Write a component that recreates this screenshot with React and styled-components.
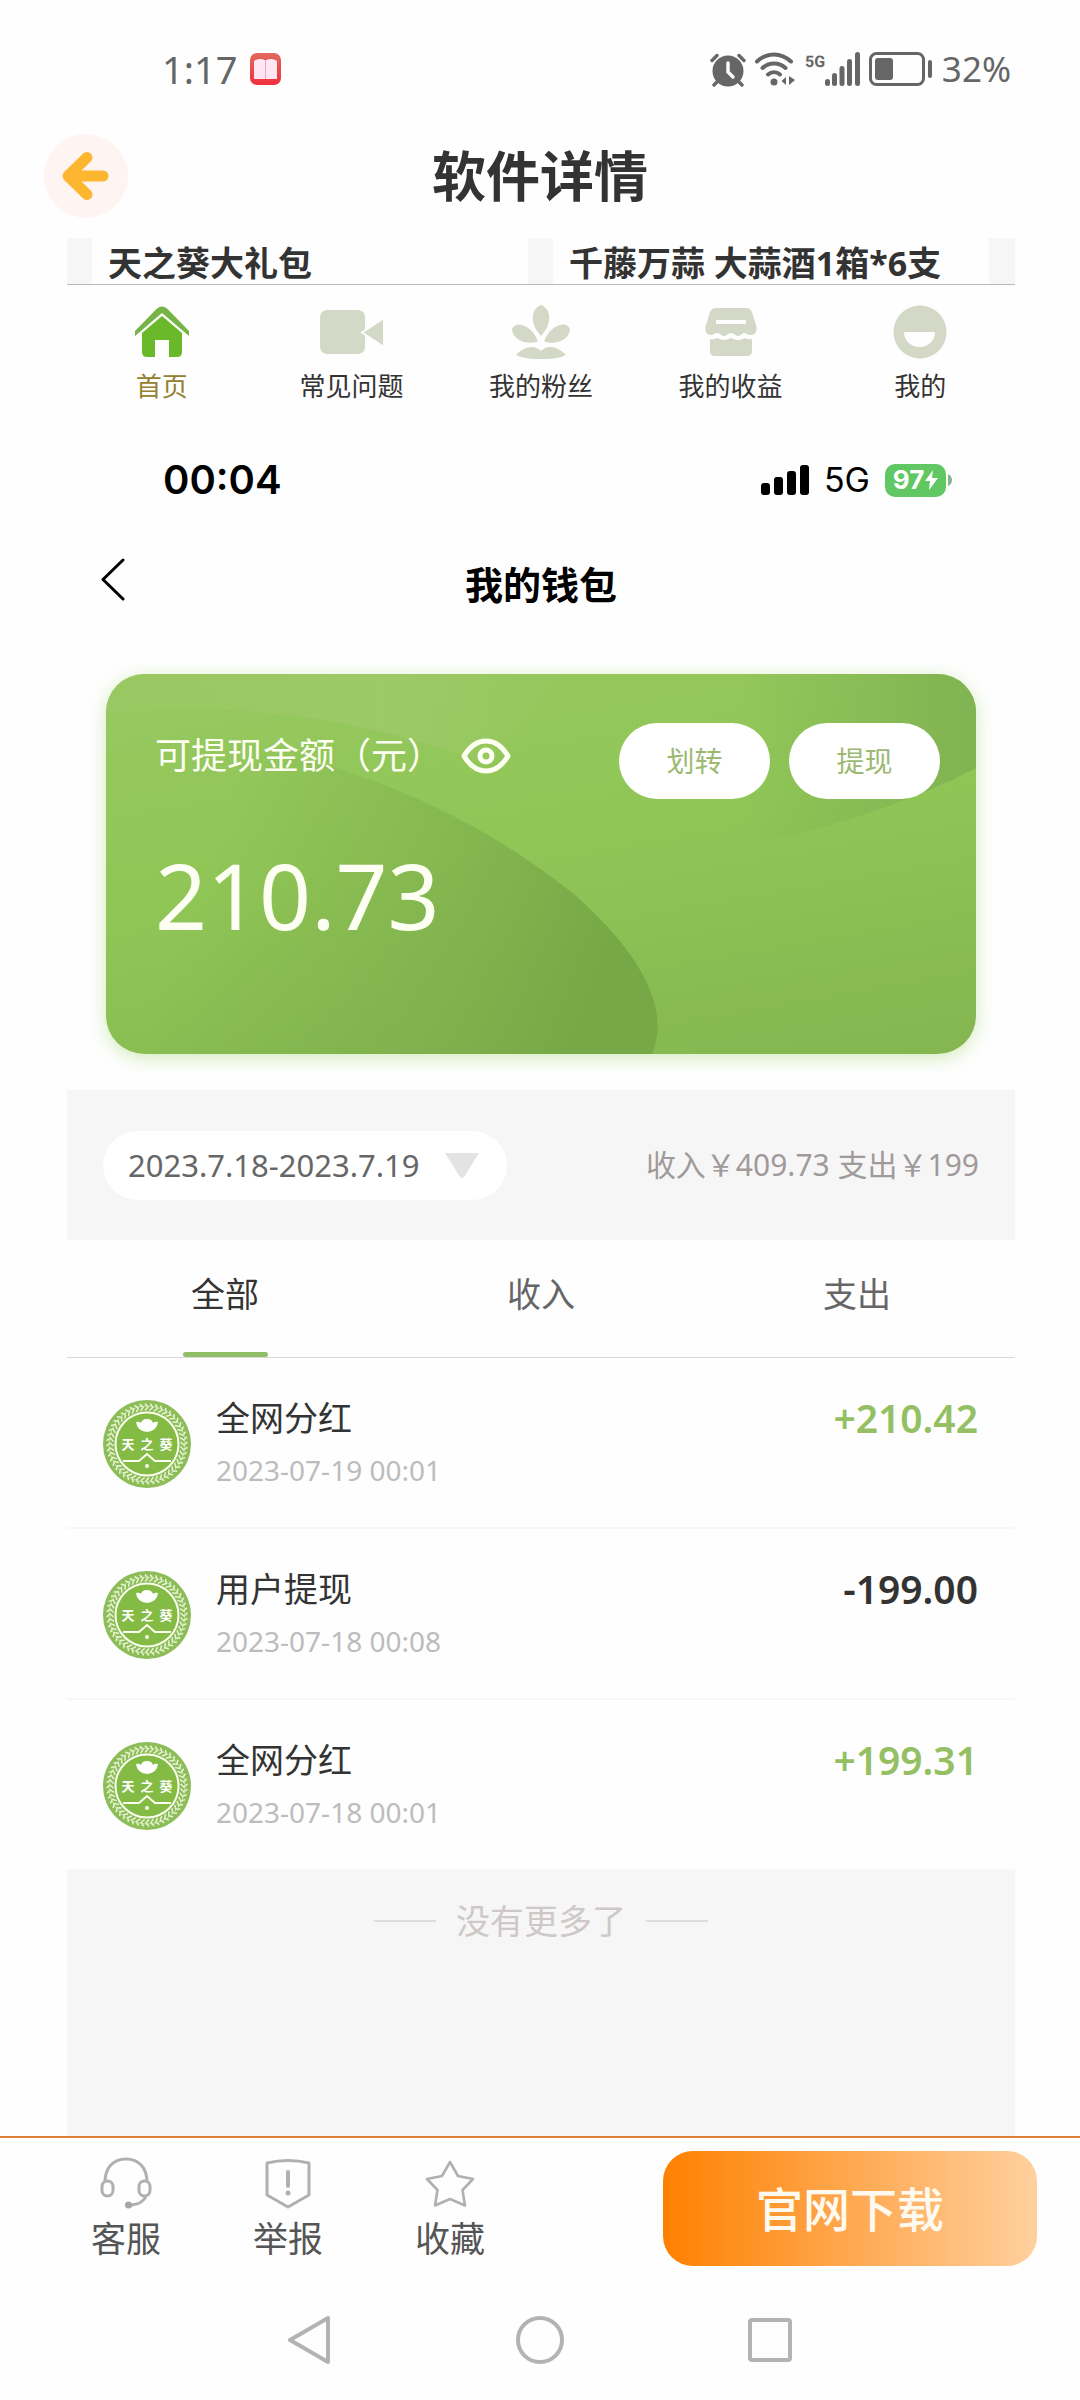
import React from "react";
import styled, { createGlobalStyle } from "styled-components";

const GlobalStyle = createGlobalStyle`
  *, *::before, *::after { box-sizing: border-box; }
  body {
    margin: 0;
    background: #fefefe;
    color: #333;
    font-family: "Noto Sans", "Noto Sans CJK SC", sans-serif;
  }
  button, select { font: inherit; color: inherit; border: 0; background: none; padding: 0; margin: 0; }
  button { cursor: pointer; }
  a { color: inherit; text-decoration: none; }
  h1, h2, p, ul { margin: 0; padding: 0; }
  svg { display: block; flex: none; }
`;

const Page = styled.div`
  display: flex;
  flex-direction: column;
  min-height: 100vh;
`;

/* Device status bar */
const StatusBar = styled.div`
  display: flex;
  justify-content: space-between;
  align-items: center;
  height: 126px;
  padding: 12px 69px 0 162px;
  color: #666;
`;
const StatusGroup = styled.div`
  display: flex;
  align-items: center;
  gap: ${(p) => p.$gap}px;
`;
const StatusText = styled.span`
  font-size: ${(p) => p.$size}px;
  line-height: 48px;
`;

/* Page header */
const Header = styled.header`
  display: grid;
  grid-template-columns: 84px 1fr 84px;
  align-items: center;
  height: 100px;
  padding: 0 44px;
`;
const RoundBack = styled.button`
  display: grid;
  place-items: center;
  width: 84px;
  height: 84px;
  border-radius: 50%;
  background: #fef5f3;
`;
const PageTitle = styled.h1`
  font-size: 54px;
  line-height: 72px;
  font-weight: 700;
  text-align: center;
`;

/* Software preview */
const Preview = styled.main`
  flex: 1;
  display: flex;
  flex-direction: column;
  margin: 12px 65px 0 67px;
`;
const ProductStrip = styled.div`
  display: grid;
  grid-template-columns: 1fr 1fr;
  gap: 25px;
  padding: 0 26px 0 25px;
  background: #f6f6f6;
  border-bottom: 1px solid #b8b8b8;
`;
const Product = styled.p`
  padding: 4px 0 0 16px;
  background: #fefefe;
  font-size: 34px;
  line-height: 42px;
  font-weight: 700;
  white-space: nowrap;
`;
const AppNav = styled.nav`
  display: grid;
  grid-template-columns: repeat(5, 1fr);
  padding-top: 20px;
`;
const AppNavItem = styled.a`
  display: flex;
  flex-direction: column;
  align-items: center;
  gap: 9px;
  font-size: 26px;
  line-height: 36px;
  color: ${(p) => (p.$active ? "#93812f" : "#333")};
`;

const PhoneBar = styled.div`
  display: flex;
  justify-content: space-between;
  align-items: center;
  height: 60px;
  margin-top: 46px;
  padding: 0 63px 0 96px;
  color: #000;
  font-family: Inter, sans-serif;
`;
const PhoneTime = styled.span`
  font-size: 40px;
  line-height: 48px;
  font-weight: 600;
`;
const PhoneNetwork = styled.span`
  font-size: 34px;
  line-height: 48px;
`;
const BatteryGroup = styled.div`
  display: flex;
  align-items: center;
  gap: 2px;
`;
const BatteryBody = styled.div`
  display: flex;
  align-items: center;
  justify-content: center;
  gap: 1px;
  width: 61px;
  height: 33px;
  border-radius: 10px;
  background: #60c763;
  color: #fff;
  font-size: 26px;
  line-height: 32px;
  font-weight: 700;
`;

const WalletHeader = styled.div`
  display: grid;
  grid-template-columns: 34px 1fr 34px;
  align-items: center;
  height: 60px;
  margin-top: 44px;
  padding: 0 33px;
  color: #000;
`;
const BackLink = styled.button`
  height: 50px;
  align-self: start;
`;
const WalletTitle = styled.h2`
  font-size: 38px;
  line-height: 60px;
  font-weight: 700;
  text-align: center;
`;

const Card = styled.section`
  position: relative;
  height: 380px;
  margin: 60px 39px 0;
  padding: 49px 36px 0 49px;
  border-radius: 38px;
  background: linear-gradient(170deg, #96c860 0%, #90c656 45%, #83b650 100%);
  box-shadow: 0 4px 18px rgba(150, 205, 90, 0.4);
  color: #fdfff2;
`;
const CardArt = styled.svg`
  position: absolute;
  inset: 0;
  width: 100%;
  height: 100%;
  border-radius: 38px;
`;
const CardTop = styled.div`
  position: relative;
  display: flex;
  justify-content: space-between;
  align-items: flex-start;
`;
const BalanceLabel = styled.div`
  display: flex;
  align-items: center;
  gap: 18px;
  font-size: 36px;
  line-height: 66px;
`;
const CardActions = styled.div`
  display: flex;
  gap: 19px;
`;
const CardButton = styled.button`
  width: 151px;
  height: 76px;
  border-radius: 38px;
  background: #fff;
  color: #9cb972;
  font-size: 28px;
  line-height: 40px;
`;
const Balance = styled.p`
  position: relative;
  margin-top: 36px;
  font-size: 91px;
  line-height: 120px;
`;

const FilterBar = styled.div`
  display: flex;
  justify-content: space-between;
  align-items: center;
  height: 150px;
  margin-top: 36px;
  padding: 0 36px;
  background: #f6f6f6;
`;
const DatePill = styled.label`
  display: flex;
  align-items: center;
  gap: 24px;
  height: 69px;
  padding: 0 27px 0 25px;
  border-radius: 35px;
  background: #fff;
  color: #666;
`;
const DateSelect = styled.select`
  appearance: none;
  height: 69px;
  font-size: 31px;
  outline: 0;
`;
const Summary = styled.p`
  color: #a09a9a;
  font-size: 30px;
  line-height: 42px;
`;

const Tabs = styled.div`
  display: grid;
  grid-template-columns: repeat(3, 1fr);
  border-bottom: 1px solid #d8d8d8;
`;
const Tab = styled.button`
  display: flex;
  flex-direction: column;
  align-items: center;
  gap: 34px;
  padding-top: 30px;
  color: ${(p) => (p.$active ? "#333" : "#666")};
  font-size: 34px;
  line-height: 48px;

  &::after {
    content: "";
    width: 85px;
    height: 5px;
    border-radius: 3px;
    background: ${(p) => (p.$active ? "#8fbe66" : "transparent")};
  }
`;

const Records = styled.ul`
  list-style: none;
`;
const Record = styled.li`
  display: flex;
  align-items: center;
  gap: 25px;
  padding: 38px 37px 35px 36px;
  border-bottom: 2px solid #f7f7f7;
`;
const RecordText = styled.div`
  flex: 1;
  display: flex;
  flex-direction: column;
  gap: 8px;
  line-height: 44px;
`;
const RecordTitle = styled.span`
  font-size: 34px;
`;
const RecordDate = styled.time`
  color: #bcbcbc;
  font-size: 28px;
`;
const RecordAmount = styled.span`
  align-self: flex-start;
  color: ${(p) => (p.$income ? "#94c063" : "#333")};
  font-size: 39px;
  line-height: 44px;
  font-weight: 600;
`;

const ListEnd = styled.div`
  flex: 1;
  display: flex;
  justify-content: center;
  align-items: flex-start;
  min-height: 100px;
  padding-top: 26px;
  background: #f6f6f6;
`;
const ListEndText = styled.p`
  display: flex;
  align-items: center;
  gap: 20px;
  color: #cfc8c8;
  font-size: 34px;
  line-height: 48px;

  &::before,
  &::after {
    content: "";
    width: 62px;
    height: 2px;
    background: #e0dcdc;
  }
`;

/* Bottom actions */
const ActionBar = styled.footer`
  display: flex;
  justify-content: space-between;
  align-items: flex-start;
  padding: 13px 43px 14px 45px;
  border-top: 2px solid #dd8238;
`;
const Actions = styled.div`
  display: flex;
`;
const Action = styled.button`
  display: flex;
  flex-direction: column;
  align-items: center;
  gap: 5px;
  width: 162px;
  padding-top: 6px;
  color: #555;
  font-size: 35px;
  line-height: 50px;
`;
const Download = styled.button`
  width: 374px;
  height: 115px;
  border-radius: 30px;
  background: linear-gradient(90deg, #ff8000, #ffd09f);
  color: #fffaf0;
  font-size: 47px;
  line-height: 64px;
  font-weight: 500;
`;
const SystemNav = styled.nav`
  display: flex;
  justify-content: center;
  height: 120px;
`;
const SystemKey = styled.button`
  display: grid;
  place-items: center;
  width: 230px;
`;

const PALE = "#d3d9c6";

const BookIcon = () => (
  <svg width="31" height="32" viewBox="0 0 31 32">
    <defs>
      <linearGradient id="book" x1="0" y1="0" x2="0" y2="1">
        <stop offset="0" stopColor="#e2685f" />
        <stop offset="1" stopColor="#f0303f" />
      </linearGradient>
    </defs>
    <rect width="31" height="32" rx="7" fill="url(#book)" />
    <path d="M4 8c4-2.500 8-2.500 11.500-.5C19 5.500 23 5.500 27 8v18H4z" fill="#ffe6f2" />
    <path d="M15.500 7.500V26" stroke="#e8a9bb" strokeWidth="1" />
  </svg>
);

const AlarmIcon = () => (
  <svg width="36" height="35" viewBox="0 0 36 35" fill="none" stroke="#666" strokeWidth="3.400" strokeLinecap="round">
    <circle cx="18" cy="19" r="15.500" fill="#666" stroke="none" />
    <path d="M2 8.500 7 3.500M34 8.500l-5-5M7 30l-3 3M29 30l3 3" />
    <path d="M18 11v9l5 5" stroke="#fefefe" />
  </svg>
);

const WifiIcon = () => (
  <svg width="40" height="34" viewBox="0 0 40 34" fill="none" stroke="#666" strokeWidth="4" strokeLinecap="round">
    <path d="M2 9.500C12 0 26 0 36 9.500M7.500 16c6.500-6 16.500-6 23 0M13 22.500c3.500-3 8.500-3 12 0" />
    <circle cx="19" cy="30" r="3.500" fill="#666" stroke="none" />
    <path d="M31 25v8l-4.500-4zM34 24v9l6-5z" fill="#666" stroke="none" />
  </svg>
);

const FiveGBars = () => (
  <svg width="56" height="34" viewBox="-3 0 56 34">
    <text x="-2" y="15" fontFamily="Roboto, sans-serif" fontSize="16" fontWeight="700" fill="#666" textRendering="geometricPrecision">
      5G
    </text>
    <g fill="#666">
      <rect x="18" y="27" width="5" height="7" rx="2.500" />
      <rect x="25" y="21" width="5" height="13" rx="2.500" />
      <rect x="32.500" y="14" width="5" height="20" rx="2.500" />
      <rect x="40" y="7" width="5" height="27" rx="2.500" />
      <rect x="48" y="0" width="5" height="34" rx="2.500" />
    </g>
  </svg>
);

const BatteryIcon = () => (
  <svg width="64" height="34" viewBox="0 0 64 34">
    <rect x="1.500" y="1.500" width="53" height="31" rx="6" fill="none" stroke="#666" strokeWidth="3" />
    <rect x="6" y="6" width="18" height="22" rx="3" fill="#666" />
    <rect x="59" y="8" width="4" height="18" rx="2" fill="#666" />
  </svg>
);

const ArrowIcon = () => (
  <svg width="48" height="50" viewBox="0 0 48 50">
    <path d="M25 6.500 6 25l19 18.500M8 25h33" fill="none" stroke="#fdb62f" strokeWidth="11" strokeLinecap="round" strokeLinejoin="round" />
  </svg>
);

const HomeIcon = () => (
  <svg width="56" height="54" viewBox="0 0 56 54">
    <path d="M1 31v-5L22 4.500c4-4 8-4 12 0L55 26v5L28 8z" fill="#76b545" />
    <path d="M28 11 8 28v19q0 5 5 5h8V35h14v17h8q5 0 5-5V28z" fill="#69b92a" />
  </svg>
);
const CameraIcon = () => (
  <svg width="63" height="54" viewBox="0 0 63 54" fill={PALE}>
    <rect x="0" y="5" width="45" height="44" rx="7" />
    <path d="M64 13v29L42 27.500z" stroke="#fefefe" strokeWidth="2" />
  </svg>
);
const PlantIcon = () => (
  <svg width="62" height="54" viewBox="0 0 62 54" fill={PALE}>
    <path d="M31 31C19 18 21 4 31 0c10 4 12 18 0 31z" />
    <path d="M29 37C16 41 4 37 1 25c1-10 20-9 28 12zM33 37c13 4 25 0 28-12-1-10-20-9-28 12z" stroke="#fefefe" strokeWidth="1.500" />
    <path d="M6 50c8-8 18-11 25-4 7-7 17-4 25 4-8 4-16 4-25 4s-17 0-25-4z" />
  </svg>
);
const ShopIcon = () => (
  <svg width="54" height="54" viewBox="0 0 54 54">
    <path d="M12 3h30q4 0 6 4l4 13c2 6-1 10-5 10-4 0-5-2-7-2s-3 3-6 3-4-3-7-3-4 3-7 3-4-3-7-3-3 2-6 2c-5 0-7-5-5-10L6 7q2-4 6-4z" fill={PALE} />
    <rect x="12" y="15" width="30" height="4" fill="#fefefe" />
    <path d="M6 34q4 1 7-1 4 2 7 2t7-2q3 2 7 2t7-2q3 2 7 1v12q0 5-5 5H11q-5 0-5-5z" fill={PALE} />
  </svg>
);
const SmileIcon = () => (
  <svg width="54" height="54" viewBox="0 0 54 54">
    <circle cx="27" cy="27" r="26.500" fill={PALE} />
    <path d="M11 27h31c0 8-6 15-15.500 15S11 35 11 27z" fill="#fefefe" />
  </svg>
);

const CellBars = () => (
  <svg width="48" height="30" viewBox="0 0 48 30">
    <rect x="0" y="18" width="9" height="12" rx="3" />
    <rect x="13" y="12" width="9" height="18" rx="3" />
    <rect x="26" y="6" width="9" height="24" rx="3" />
    <rect x="39" y="0" width="9" height="30" rx="3" />
  </svg>
);
const BoltIcon = () => (
  <svg width="13" height="20" viewBox="0 0 13 20">
    <path d="M8 0 0 11h5l-1 9 9-12H7z" fill="#fff" />
  </svg>
);
const BatteryNub = () => (
  <svg width="4" height="12" viewBox="0 0 4 12">
    <path d="M0 0q4 2 4 6t-4 6z" fill="#7fb98a" />
  </svg>
);
const ChevronIcon = () => (
  <svg width="26" height="43" viewBox="0 0 26 43">
    <path d="M23 2 3 21.500 23 41" fill="none" stroke="#000" strokeWidth="3" strokeLinecap="round" strokeLinejoin="round" />
  </svg>
);
const EyeIcon = () => (
  <svg width="50" height="36" viewBox="0 0 50 36" fill="none" stroke="#fdfff2" strokeWidth="5">
    <path d="M3 18C9 8 16 3 25 3s16 5 22 15C41 28 34 33 25 33S9 28 3 18z" strokeLinejoin="round" />
    <circle cx="25" cy="18" r="6" />
  </svg>
);
const Caret = () => (
  <svg width="36" height="25" viewBox="0 0 36 25">
    <path d="M1 0h34L20 24q-2 2-4 0z" fill="#e3e3e3" />
  </svg>
);

const CHEVRONS = Array.from({ length: 48 }, (_, i) => i * 7.5);

const BrandBadge = () => (
  <svg width="88" height="88" viewBox="0 0 88 88">
    <circle cx="44" cy="44" r="44" fill="#8dbd58" />
    <g fill="none" stroke="#eaf6d8" strokeWidth="1.400">
      {CHEVRONS.map((a) => (
        <path key={a} d="M42 3.500l3 3.500-3 3.500" transform={`rotate(${a} 44 44)`} />
      ))}
    </g>
    <circle cx="44" cy="44" r="38" fill="none" stroke="#d6eab8" strokeWidth="0.800" />
    <circle cx="44" cy="44" r="31.500" fill="#84bb45" stroke="#fbfff0" strokeWidth="2" />
    <path d="M33 22q3-1 5 1 1-4 6-4t6 4q2-2 5-1-1 9-11 10-10-1-11-10z" fill="#fff" />
    <g fill="#fff" fontFamily="'Noto Sans CJK SC', sans-serif" fontSize="13" fontWeight="700" textAnchor="middle">
      <text x="25" y="49">天</text>
      <text x="44" y="49">之</text>
      <text x="63" y="49">葵</text>
    </g>
    <path d="M20 61h16l8-7 8 7h16" fill="none" stroke="#fbfff0" strokeWidth="2" />
    <circle cx="44" cy="66" r="2" fill="#fbfff0" />
  </svg>
);

const HeadsetIcon = () => (
  <svg width="52" height="52" viewBox="0 0 52 52" fill="none" stroke="#b0b0b0" strokeWidth="3">
    <path d="M5 25C5 11 13 2 26 2s21 9 21 23" />
    <rect x="2" y="24" width="11" height="15" rx="5.500" />
    <rect x="39" y="24" width="11" height="15" rx="5.500" />
    <path d="M46 39c-2 5-8 9-17 9" />
    <circle cx="28.500" cy="48" r="3.500" fill="#a6a6a6" stroke="none" />
  </svg>
);
const ShieldIcon = () => (
  <svg width="46" height="52" viewBox="0 0 46 52" fill="none" stroke="#b0b0b0" strokeWidth="3" strokeLinejoin="round">
    <path d="M2 6q21-5 42 0v32L23 50 2 38z" />
    <path d="M23 15v14" strokeWidth="4" strokeLinecap="round" />
    <circle cx="23" cy="36" r="2.500" fill="#b0b0b0" stroke="none" />
  </svg>
);
const StarIcon = () => (
  <svg width="50" height="52" viewBox="0 0 50 52" fill="none" stroke="#b0b0b0" strokeWidth="2.600" strokeLinejoin="round">
    <path d="M25 5l8 14 15 3-10.500 11L40 48.500 25 42l-15 6.500L12.500 33 2 22l15-3z" />
  </svg>
);

const BackKey = () => (
  <svg width="44" height="50" viewBox="0 0 44 50">
    <path d="M40 3v44L2 25z" fill="none" stroke="#b3b3b3" strokeWidth="4" strokeLinejoin="round" />
  </svg>
);
const HomeKey = () => (
  <svg width="50" height="50" viewBox="0 0 50 50">
    <circle cx="25" cy="25" r="22" fill="none" stroke="#b3b3b3" strokeWidth="4" />
  </svg>
);
const RecentKey = () => (
  <svg width="44" height="44" viewBox="0 0 44 44">
    <rect x="2" y="2" width="40" height="40" rx="2" fill="none" stroke="#b3b3b3" strokeWidth="4" />
  </svg>
);

const navItems = [
  { label: "首页", Icon: HomeIcon, active: true },
  { label: "常见问题", Icon: CameraIcon },
  { label: "我的粉丝", Icon: PlantIcon },
  { label: "我的收益", Icon: ShopIcon },
  { label: "我的", Icon: SmileIcon },
];

const tabs = ["全部", "收入", "支出"];

const records = [
  { title: "全网分红", date: "2023-07-19 00:01", amount: "+210.42", income: true },
  { title: "用户提现", date: "2023-07-18 00:08", amount: "-199.00", income: false },
  { title: "全网分红", date: "2023-07-18 00:01", amount: "+199.31", income: true },
];

const actions = [
  { label: "客服", Icon: HeadsetIcon },
  { label: "举报", Icon: ShieldIcon },
  { label: "收藏", Icon: StarIcon },
];

function WalletCard() {
  return (
    <Card>
      <CardArt viewBox="0 0 870 380" preserveAspectRatio="none" aria-hidden="true">
        <defs>
          <linearGradient id="hill" x1="0" y1="0" x2="1" y2="0.2">
            <stop offset="0.25" stopColor="#7cac4a" stopOpacity="0" />
            <stop offset="0.7" stopColor="#7cac4a" stopOpacity="0.6" />
            <stop offset="1" stopColor="#77a847" stopOpacity="1" />
          </linearGradient>
          <linearGradient id="corner" x1="0" y1="0" x2="1" y2="0">
            <stop offset="0.5" stopColor="#80b352" stopOpacity="0" />
            <stop offset="1" stopColor="#80b352" stopOpacity="1" />
          </linearGradient>
          <linearGradient id="glow" x1="0" y1="0" x2="1" y2="0">
            <stop offset="0" stopColor="#9fc968" stopOpacity="0.3" />
            <stop offset="0.6" stopColor="#9fc968" stopOpacity="0.9" />
            <stop offset="1" stopColor="#9fc968" stopOpacity="0" />
          </linearGradient>
        </defs>
        <path d="M0 0H460L380 90Q200 20 0 40z" fill="url(#glow)" />
        <path d="M400 0H870V94C800 130 730 152 640 172z" fill="url(#corner)" />
        <path d="M0 60C220 60 380 148 470 222C535 280 565 335 546 380H0z" fill="url(#hill)" />
      </CardArt>
      <CardTop>
        <BalanceLabel>
          可提现金额（元）
          <button type="button" aria-label="显示金额">
            <EyeIcon />
          </button>
        </BalanceLabel>
        <CardActions>
          <CardButton type="button">划转</CardButton>
          <CardButton type="button">提现</CardButton>
        </CardActions>
      </CardTop>
      <Balance>210.73</Balance>
    </Card>
  );
}

export default function App() {
  return (
    <Page>
      <GlobalStyle />
      <StatusBar>
        <StatusGroup $gap={13}>
          <StatusText $size={38}>1:17</StatusText>
          <BookIcon />
        </StatusGroup>
        <StatusGroup $gap={9}>
          <AlarmIcon />
          <WifiIcon />
          <FiveGBars />
          <BatteryIcon />
          <StatusText $size={35}>32%</StatusText>
        </StatusGroup>
      </StatusBar>

      <Header>
        <RoundBack type="button" aria-label="返回">
          <ArrowIcon />
        </RoundBack>
        <PageTitle>软件详情</PageTitle>
      </Header>

      <Preview>
        <ProductStrip>
          <Product>天之葵大礼包</Product>
          <Product>千藤万蒜 大蒜酒1箱*6支</Product>
        </ProductStrip>

        <AppNav>
          {navItems.map(({ label, Icon, active }) => (
            <AppNavItem key={label} href="#" $active={active}>
              <Icon />
              {label}
            </AppNavItem>
          ))}
        </AppNav>

        <PhoneBar>
          <PhoneTime>00:04</PhoneTime>
          <StatusGroup $gap={15}>
            <CellBars />
            <PhoneNetwork>5G</PhoneNetwork>
            <BatteryGroup>
              <BatteryBody>
                97
                <BoltIcon />
              </BatteryBody>
              <BatteryNub />
            </BatteryGroup>
          </StatusGroup>
        </PhoneBar>

        <WalletHeader>
          <BackLink type="button" aria-label="返回">
            <ChevronIcon />
          </BackLink>
          <WalletTitle>我的钱包</WalletTitle>
        </WalletHeader>

        <WalletCard />

        <FilterBar>
          <DatePill>
            <DateSelect aria-label="日期范围">
              <option>2023.7.18-2023.7.19</option>
            </DateSelect>
            <Caret />
          </DatePill>
          <Summary>收入￥409.73 支出￥199</Summary>
        </FilterBar>

        <Tabs role="tablist">
          {tabs.map((label, i) => (
            <Tab key={label} type="button" role="tab" aria-selected={i === 0} $active={i === 0}>
              {label}
            </Tab>
          ))}
        </Tabs>

        <Records>
          {records.map((r) => (
            <Record key={r.date}>
              <BrandBadge />
              <RecordText>
                <RecordTitle>{r.title}</RecordTitle>
                <RecordDate>{r.date}</RecordDate>
              </RecordText>
              <RecordAmount $income={r.income}>{r.amount}</RecordAmount>
            </Record>
          ))}
        </Records>

        <ListEnd>
          <ListEndText>没有更多了</ListEndText>
        </ListEnd>
      </Preview>

      <ActionBar>
        <Actions>
          {actions.map(({ label, Icon }) => (
            <Action key={label} type="button">
              <Icon />
              {label}
            </Action>
          ))}
        </Actions>
        <Download type="button">官网下载</Download>
      </ActionBar>

      <SystemNav>
        <SystemKey type="button" aria-label="后退">
          <BackKey />
        </SystemKey>
        <SystemKey type="button" aria-label="主屏幕">
          <HomeKey />
        </SystemKey>
        <SystemKey type="button" aria-label="最近任务">
          <RecentKey />
        </SystemKey>
      </SystemNav>
    </Page>
  );
}
